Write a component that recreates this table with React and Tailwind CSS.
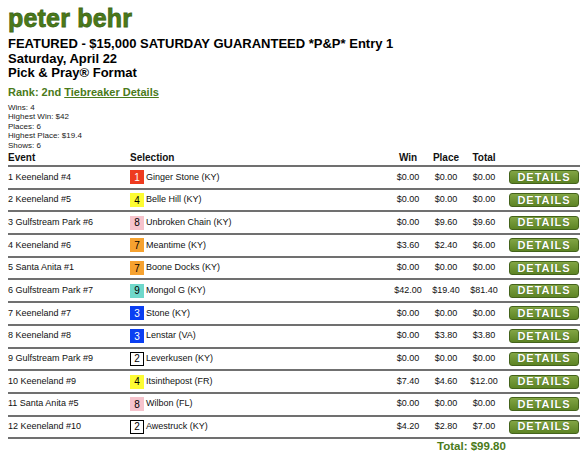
const rows = [
  { ev: '1 Keeneland #4', num: '1', badge: 'bg-[#ee3b1f] text-white', horse: 'Ginger Stone (KY)', win: '$0.00', place: '$0.00', total: '$0.00' },
  { ev: '2 Keeneland #5', num: '4', badge: 'bg-[#fdfc33] text-black', horse: 'Belle Hill (KY)', win: '$0.00', place: '$0.00', total: '$0.00' },
  { ev: '3 Gulfstream Park #6', num: '8', badge: 'bg-[#f6c3cc] text-black', horse: 'Unbroken Chain (KY)', win: '$0.00', place: '$9.60', total: '$9.60' },
  { ev: '4 Keeneland #6', num: '7', badge: 'bg-[#f6a230] text-black', horse: 'Meantime (KY)', win: '$3.60', place: '$2.40', total: '$6.00' },
  { ev: '5 Santa Anita #1', num: '7', badge: 'bg-[#f6a230] text-black', horse: 'Boone Docks (KY)', win: '$0.00', place: '$0.00', total: '$0.00' },
  { ev: '6 Gulfstream Park #7', num: '9', badge: 'bg-[#70d8cb] text-black', horse: 'Mongol G (KY)', win: '$42.00', place: '$19.40', total: '$81.40' },
  { ev: '7 Keeneland #7', num: '3', badge: 'bg-[#0b3ff2] text-white', horse: 'Stone (KY)', win: '$0.00', place: '$0.00', total: '$0.00' },
  { ev: '8 Keeneland #8', num: '3', badge: 'bg-[#0b3ff2] text-white', horse: 'Lenstar (VA)', win: '$0.00', place: '$3.80', total: '$3.80' },
  { ev: '9 Gulfstream Park #9', num: '2', badge: 'bg-white text-black border border-black', horse: 'Leverkusen (KY)', win: '$0.00', place: '$0.00', total: '$0.00' },
  { ev: '10 Keeneland #9', num: '4', badge: 'bg-[#fdfc33] text-black', horse: 'Itsinthepost (FR)', win: '$7.40', place: '$4.60', total: '$12.00' },
  { ev: '11 Santa Anita #5', num: '8', badge: 'bg-[#f6c3cc] text-black', horse: 'Wilbon (FL)', win: '$0.00', place: '$0.00', total: '$0.00' },
  { ev: '12 Keeneland #10', num: '2', badge: 'bg-white text-black border border-black', horse: 'Awestruck (KY)', win: '$4.20', place: '$2.80', total: '$7.00' },
];

const cols = 'grid grid-cols-[122px_259px_38px_38px_38px_77px]';

function DetailsButton() {
  return (
    <div className="w-[70px] h-[14px] rounded-[3px] border border-[#44631c] bg-gradient-to-b from-[#82a544] to-[#5d8424] flex items-center justify-center">
      <span className="text-white font-bold text-[11px] leading-none tracking-[1px] [text-shadow:0_0_1px_#33500f]">DETAILS</span>
    </div>
  );
}

export default function App() {
  return (
    <div className="w-[584px] h-[457px] bg-white overflow-hidden px-[8px] text-[#111] font-['Liberation_Sans',Arial,sans-serif]">
      {/* Header */}
      <h1 className="pt-[5px] h-[31px] text-[25px] leading-[26px] font-bold tracking-[0.2px] text-[#4a7a1a] [-webkit-text-stroke:0.8px_#3f6816]">
        peter behr
      </h1>
      <div className="mt-[6px] text-[13px] leading-[14.5px] font-bold text-black">
        <div className="whitespace-nowrap">FEATURED - $15,000 SATURDAY GUARANTEED *P&amp;P* Entry 1</div>
        <div>Saturday, April 22</div>
        <div>Pick &amp; Pray® Format</div>
      </div>
      <div className="mt-[5px] text-[11px] leading-[13px] font-bold text-[#4a7a1a]">
        Rank: 2nd <span className="underline">Tiebreaker Details</span>
      </div>

      {/* Stats */}
      <div className="mt-[4px] text-[8px] leading-[9.5px] text-[#222]">
        <div>Wins: 4</div>
        <div>Highest Win: $42</div>
        <div>Places: 6</div>
        <div>Highest Place: $19.4</div>
        <div>Shows: 6</div>
      </div>

      {/* Table */}
      <div className="w-[572px]">
        <div className={`${cols} h-[17px] pt-[1.5px] text-[10px] leading-[12px] font-bold border-b-2 border-[#707070]`}>
          <div>Event</div>
          <div>Selection</div>
          <div className="text-center">Win</div>
          <div className="text-center">Place</div>
          <div className="text-center">Total</div>
          <div></div>
        </div>
        {rows.map((r, i) => (
          <div key={i} className={`${cols} h-[22.7px] items-center text-[9px] border-b-2 border-[#707070]`}>
            <div className="whitespace-nowrap">{r.ev}</div>
            <div className="flex items-center gap-[2px]">
              <span className={`w-[14px] h-[14px] flex items-center justify-center text-[10px] ${r.badge}`}>{r.num}</span>
              <span className="whitespace-nowrap">{r.horse}</span>
            </div>
            <div className="text-center whitespace-nowrap">{r.win}</div>
            <div className="text-center whitespace-nowrap">{r.place}</div>
            <div className="text-center whitespace-nowrap">{r.total}</div>
            <div className="flex justify-end pr-[1px]">
              <DetailsButton />
            </div>
          </div>
        ))}
        <div className="ml-[388.5px] w-[150px] text-center text-[11.5px] leading-[13px] font-bold text-[#4a7a1a] pt-[1px]">
          Total: $99.80
        </div>
      </div>
    </div>
  );
}
